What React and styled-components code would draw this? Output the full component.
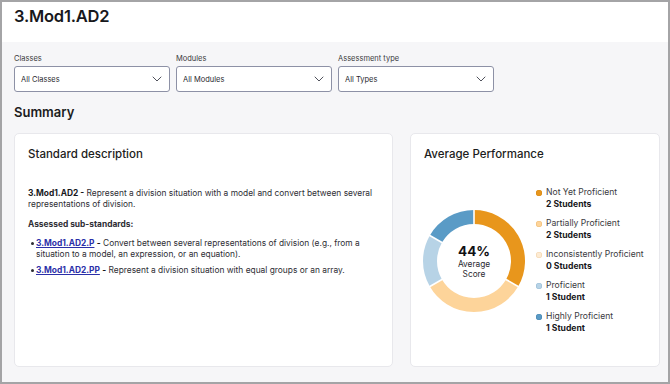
import React from 'react'
import styled, { createGlobalStyle } from 'styled-components'

const GlobalStyle = createGlobalStyle`
  html, body {
    margin: 0;
    padding: 0;
    background: #ffffff;
  }
  body {
    font-family: Inter, "Noto Sans", "Liberation Sans", sans-serif;
    color: #1f1f24;
  }
`

const Frame = styled.div`
  width: 670px;
  height: 384px;
  box-sizing: border-box;
  border: 2px solid #a4a4a6;
  display: flex;
  flex-direction: column;
  overflow: hidden;
  background: #f6f6f8;
`

const Header = styled.header`
  height: 40px;
  background: #ffffff;
  padding: 4px 12px 0;
  box-sizing: border-box;
`

const Title = styled.h1`
  margin: 0;
  font-size: 16.5px;
  font-weight: 600;
  letter-spacing: -0.2px;
  color: #18181c;
`

const Content = styled.main`
  padding: 11px 12px 0;
  display: flex;
  flex-direction: column;
`

const Filters = styled.div`
  display: flex;
  gap: 6px;
`

const Field = styled.div`
  width: 156px;
  display: flex;
  flex-direction: column;
  gap: 2px;
`

const Label = styled.label`
  font-size: 7.5px;
  color: #3a3a40;
  line-height: 11px;
`

const Select = styled.div`
  height: 26px;
  box-sizing: border-box;
  border: 1px solid #8d91a6;
  border-radius: 3px;
  background: #ffffff;
  display: flex;
  align-items: center;
  justify-content: space-between;
  padding: 0 7px 0 6px;
  font-size: 7.5px;
  color: #2a2a30;
`

const SectionTitle = styled.h2`
  margin: 12px 0 13px;
  font-size: 13px;
  font-weight: 600;
  color: #1c1c20;
`

const Cards = styled.div`
  display: grid;
  grid-template-columns: 379px 250px;
  gap: 17px;
`

const Card = styled.section`
  height: 234px;
  box-sizing: border-box;
  background: #ffffff;
  border: 1px solid #e8e8ec;
  border-radius: 5px;
  padding: 13px 13px;
`

const CardTitle = styled.h3`
  margin: 0;
  font-size: 11.5px;
  font-weight: 500;
  color: #1c1c20;
`

const Desc = styled.p`
  margin: ${p => p.$top || 0}px 0 0;
  font-size: 8.4px;
  line-height: 11px;
  color: #2e2e34;
  font-weight: ${p => (p.$bold ? 700 : 400)};
`

const Code = styled.span`
  font-weight: 700;
  color: #18181c;
`

const SubList = styled.ul`
  margin: 8px 0 0;
  padding-left: 8px;
  list-style: none;
`

const SubItem = styled.li`
  position: relative;
  font-size: 8.4px;
  line-height: 11px;
  color: #2e2e34;
  margin-bottom: 5px;
  &::before {
    content: '';
    position: absolute;
    left: -5px;
    top: 4px;
    width: 3px;
    height: 3px;
    border-radius: 50%;
    background: #2e2e34;
  }
`

const SubLink = styled.a`
  color: #2b2fa8;
  font-weight: 700;
  text-decoration: underline;
`

const PerfBody = styled.div`
  display: flex;
  align-items: center;
  gap: 10px;
  margin: 26px 0 0 -2px;
`

const DonutWrap = styled.div`
  position: relative;
  width: 104px;
  height: 104px;
  flex: none;
`

const DonutCenter = styled.div`
  position: absolute;
  inset: 0;
  display: flex;
  flex-direction: column;
  align-items: center;
  justify-content: center;
  padding-top: 1px;
`

const Pct = styled.div`
  font-size: 13.5px;
  font-weight: 700;
  color: #111114;
  line-height: 15px;
`

const PctLabel = styled.div`
  font-size: 8.3px;
  line-height: 10px;
  color: #2a2a30;
  text-align: center;
`

const Legend = styled.ul`
  margin: 0;
  padding: 0;
  list-style: none;
  display: flex;
  flex-direction: column;
  gap: 8px;
`

const LegendItem = styled.li`
  display: flex;
  gap: 4px;
`

const Dot = styled.span`
  width: 6px;
  height: 6px;
  border-radius: 50%;
  margin-top: 3px;
  flex: none;
  background: ${p => p.$color};
  box-shadow: inset 0 0 0 0.6px ${p => p.$edge};
`

const LegendText = styled.div`
  font-size: 8.6px;
  line-height: 11.5px;
  color: #3a3a40;
`

const Count = styled.div`
  font-weight: 700;
  color: #18181c;
`

const Chevron = () => (
  <svg width="10" height="6" viewBox="0 0 10 6" fill="none">
    <path d="M1 1l4 4 4-4" stroke="#50525c" strokeWidth="1" strokeLinecap="round" strokeLinejoin="round" />
  </svg>
)

const levels = [
  { name: 'Not Yet Proficient', count: 2, color: '#e8961c', edge: '#d98a14' },
  { name: 'Partially Proficient', count: 2, color: '#fdd49a', edge: '#f0bf7a' },
  { name: 'Inconsistently Proficient', count: 0, color: '#fdebd3', edge: '#f3d6b0' },
  { name: 'Proficient', count: 1, color: '#b7d3e6', edge: '#9cbfd8' },
  { name: 'Highly Proficient', count: 1, color: '#5a9bc6', edge: '#4a89b4' },
]

function Donut() {
  const total = levels.reduce((s, l) => s + l.count, 0)
  const cx = 52
  const cy = 52
  const r = 44
  let angle = 0
  const arcs = levels
    .filter(l => l.count > 0)
    .map(l => {
      const start = angle
      const sweep = (l.count / total) * 360
      angle += sweep
      const a0 = ((start - 90) * Math.PI) / 180
      const a1 = ((start + sweep - 90) * Math.PI) / 180
      const x0 = cx + r * Math.cos(a0)
      const y0 = cy + r * Math.sin(a0)
      const x1 = cx + r * Math.cos(a1)
      const y1 = cy + r * Math.sin(a1)
      const large = sweep > 180 ? 1 : 0
      return { ...l, d: `M${x0} ${y0} A${r} ${r} 0 ${large} 1 ${x1} ${y1}`, a0 }
    })
  return (
    <svg width="104" height="104" viewBox="0 0 104 104">
      {arcs.map(a => (
        <path key={a.name} d={a.d} stroke={a.color} strokeWidth="14" fill="none" />
      ))}
      {arcs.map(a => (
        <line
          key={a.name + '-gap'}
          x1={cx + 36 * Math.cos(a.a0)}
          y1={cy + 36 * Math.sin(a.a0)}
          x2={cx + 52 * Math.cos(a.a0)}
          y2={cy + 52 * Math.sin(a.a0)}
          stroke="#ffffff"
          strokeWidth="1.6"
        />
      ))}
    </svg>
  )
}

export default function App() {
  return (
    <Frame>
      <GlobalStyle />
      <Header>
        <Title>3.Mod1.AD2</Title>
      </Header>
      <Content>
        <Filters>
          <Field>
            <Label>Classes</Label>
            <Select>All Classes<Chevron /></Select>
          </Field>
          <Field>
            <Label>Modules</Label>
            <Select>All Modules<Chevron /></Select>
          </Field>
          <Field>
            <Label>Assessment type</Label>
            <Select>All Types<Chevron /></Select>
          </Field>
        </Filters>
        <SectionTitle>Summary</SectionTitle>
        <Cards>
          <Card>
            <CardTitle>Standard description</CardTitle>
            <Desc $top={27}>
              <Code>3.Mod1.AD2 -</Code> Represent a division situation with a model and convert between several representations of division.
            </Desc>
            <Desc $top={9} $bold>Assessed sub-standards:</Desc>
            <SubList>
              <SubItem>
                <SubLink href="#">3.Mod1.AD2.P</SubLink> <Code>-</Code> Convert between several representations of division (e.g., from a situation to a model, an expression, or an equation).
              </SubItem>
              <SubItem>
                <SubLink href="#">3.Mod1.AD2.PP</SubLink> <Code>-</Code> Represent a division situation with equal groups or an array.
              </SubItem>
            </SubList>
          </Card>
          <Card>
            <CardTitle>Average Performance</CardTitle>
            <PerfBody>
              <DonutWrap>
                <Donut />
                <DonutCenter>
                  <Pct>44%</Pct>
                  <PctLabel>Average<br />Score</PctLabel>
                </DonutCenter>
              </DonutWrap>
              <Legend>
                {levels.map(l => (
                  <LegendItem key={l.name}>
                    <Dot $color={l.color} $edge={l.edge} />
                    <LegendText>
                      {l.name}
                      <Count>{l.count} {l.count === 1 ? 'Student' : 'Students'}</Count>
                    </LegendText>
                  </LegendItem>
                ))}
              </Legend>
            </PerfBody>
          </Card>
        </Cards>
      </Content>
    </Frame>
  )
}
